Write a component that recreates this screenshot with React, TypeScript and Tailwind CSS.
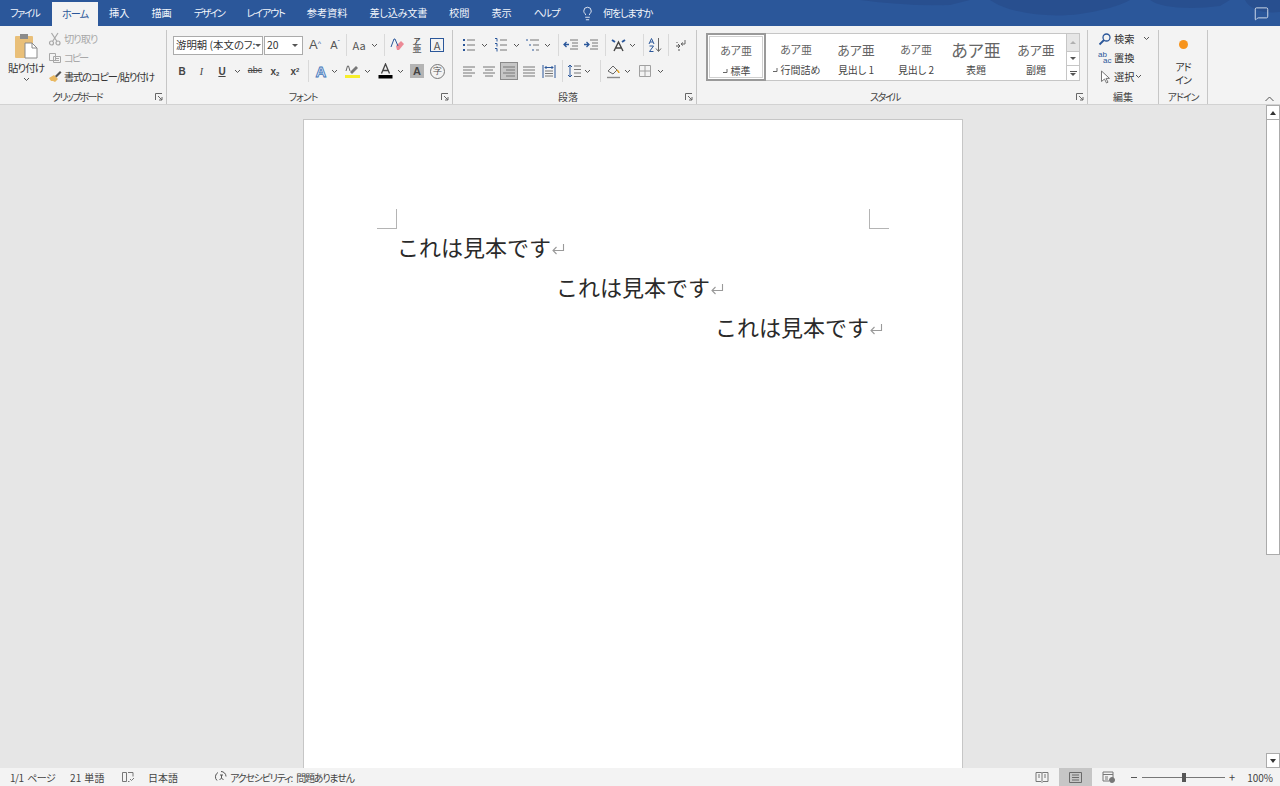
import type { ReactNode } from "react";
import { Lightbulb, MessageSquare } from "lucide-react";

const tabs = [
  { name: "挿入", tight: "" },
  { name: "描画", tight: "" },
  { name: "デザイン", tight: "tracking-[-1.7px]" },
  { name: "レイアウト", tight: "tracking-[-1.2px]" },
  { name: "参考資料", tight: "" },
  { name: "差し込み文書", tight: "tracking-[-0.3px]" },
  { name: "校閲", tight: "" },
  { name: "表示", tight: "" },
  { name: "ヘルプ", tight: "tracking-[-1.3px]" },
];

const styleItems = [
  { sample: "text-[11px]", label: "標準", mark: true, selected: true },
  { sample: "text-[11px]", label: "行間詰め", mark: true },
  { sample: "text-[13px]", label: "見出し 1" },
  { sample: "text-[11px]", label: "見出し 2" },
  { sample: "text-[17px]", label: "表題" },
  { sample: "text-[13px]", label: "副題" },
];

function Chevron({ className = "w-[10px]" }: { className?: string }) {
  return (
    <span className={`flex h-4 shrink-0 items-center justify-center ${className}`}>
      <svg width="7" height="5" viewBox="0 0 7 5" fill="none" stroke="#555" strokeWidth="1">
        <path d="M1 1l2.5 2.5L6 1" />
      </svg>
    </span>
  );
}

function Sep({ className = "" }: { className?: string }) {
  return <span className={`h-[22px] w-px shrink-0 bg-[#d9d9d9] ${className}`} />;
}

function Tool({ children, className = "w-5" }: { children: ReactNode; className?: string }) {
  return <span className={`flex h-5 shrink-0 items-center justify-center ${className}`}>{children}</span>;
}

function Icon({ children }: { children: ReactNode }) {
  return (
    <svg width="16" height="16" viewBox="0 0 16 16" fill="none" stroke="#666" strokeWidth="1">
      {children}
    </svg>
  );
}

function Launcher() {
  return (
    <svg className="absolute right-[3px] top-[3px]" width="8" height="8" viewBox="0 0 8 8" fill="none" stroke="#666" strokeWidth="1">
      <path d="M.5 7V.5H7M3 3l4 4M7 4v3H4" />
    </svg>
  );
}

function Group({ label, className, pad = "pr-[13px]", tight = "", launcher = true, children }: { label: string; className: string; pad?: string; tight?: string; launcher?: boolean; children: ReactNode }) {
  return (
    <div className={`flex h-[74px] shrink-0 flex-col border-r border-[#c6c6c6] ${className}`}>
      <div className="h-[60px]">{children}</div>
      <div className={`relative flex h-[14px] items-center justify-center text-[10px] leading-none text-[#444] ${launcher ? pad : ""}`}>
        <span className={tight}>{label}</span>
        {launcher && <Launcher />}
      </div>
    </div>
  );
}

function Lines({ align = "left", blue = false }: { align?: "left" | "center" | "right" | "justify"; blue?: boolean }) {
  const rows = {
    left: "M2 4h12M2 7h9M2 10h12M2 13h9",
    center: "M2 4h12M4 7h8M2 10h12M4 13h8",
    right: "M2 4h12M5 7h9M2 10h12M5 13h9",
    justify: "M2 4h12M2 7h12M2 10h12M2 13h12",
  }[align];
  return (
    <Icon>
      <path d={rows} stroke={blue ? "#2b579a" : "#777"} />
    </Icon>
  );
}

function ReturnMark() {
  return (
    <svg className="-mr-[15px] inline-block align-[0px]" width="15" height="15" viewBox="0 0 15 15" fill="none" stroke="#9a9a9a" strokeWidth="1.1">
      <path d="M12.5 3v6.5H2M5.5 6L2 9.5 5.5 13" />
    </svg>
  );
}

function ClipboardGroup() {
  return (
    <Group label="クリップボード" className="w-[167px]" pad="pr-[12px]" tight="tracking-[-1.7px]">
      <div className="flex h-[60px]">
        <div className="flex w-[48px] shrink-0 flex-col items-center pl-[4px]">
          <svg className="mt-[3px]" width="26" height="26" viewBox="0 0 26 26">
            <rect x="2" y="3" width="18" height="22" rx="1" fill="#e9bf78" />
            <rect x="7" y="1" width="8" height="5" fill="#8b8b8b" />
            <path d="M12 10h7l5 5v10H12z" fill="#fff" stroke="#8a8a8a" />
            <path d="M19 10v5h5" fill="none" stroke="#8a8a8a" />
          </svg>
          <span className="mt-[3px] whitespace-nowrap text-[10.5px] leading-[12px] tracking-[-1px] text-[#333]">貼り付け</span>
          <Chevron className="h-[10px] w-[10px]" />
        </div>
        <div className="-mt-px flex flex-col text-[10.2px] leading-[19px]">
          <div className="flex h-[19px] items-center text-[#a8a8a8]">
            <svg className="mr-[2px]" width="14" height="14" viewBox="0 0 14 14" fill="none" stroke="#a8a8a8" strokeWidth="1.2">
              <circle cx="3.5" cy="11" r="2" />
              <circle cx="10" cy="11" r="2" />
              <path d="M4.5 9.5L10 1M9 9.5L3.5 1" />
            </svg>
            <span className="tracking-[-1px]">切り取り</span>
          </div>
          <div className="flex h-[19px] items-center text-[#a8a8a8]">
            <svg className="mr-[2px]" width="14" height="14" viewBox="0 0 14 14" fill="none" stroke="#a8a8a8">
              <path d="M1.5 2.5h6v7h-6zM5.5 5.5h7v6h-7zM7 7.5h4M7 9.5h4" />
            </svg>
            <span className="tracking-[-2px]">コピー</span>
          </div>
          <div className="flex h-[19px] items-center whitespace-nowrap text-[#333]">
            <svg className="mr-[2px]" width="14" height="14" viewBox="0 0 14 14">
              <path d="M1 8l5-3 4 4-3 3-2-1-2 0z" fill="#e9b860" />
              <path d="M7 6l5-5 1.5 1.5-5 5z" fill="#555" />
            </svg>
            <span className="tracking-[-1.1px]">書式のコピー/貼り付け</span>
          </div>
        </div>
      </div>
    </Group>
  );
}

function FontGroup() {
  return (
    <Group label="フォント" className="w-[286px]" tight="tracking-[-1px]">
      <div className="flex h-[28px] items-center pl-[6px] pt-[2px]">
        <div className="flex h-[19px] w-[90px] items-center justify-between border border-[#ababab] bg-white pl-[2px] pr-[3px] text-[10.4px] text-[#333]">
          <span className="whitespace-nowrap">游明朝 (本文のフ:</span>
          <span className="h-0 w-0 border-x-[3px] border-t-[3px] border-x-transparent border-t-[#555]" />
        </div>
        <div className="ml-px flex h-[19px] w-[39px] items-center justify-between border border-[#ababab] bg-white pl-[2px] pr-[4px] text-[10.4px] text-[#333]">
          20
          <span className="h-0 w-0 border-x-[3px] border-t-[3px] border-x-transparent border-t-[#555]" />
        </div>
        <Tool className="ml-[2px] w-5">
          <span className="text-[13px] text-[#555]" style={{ fontFamily: "'Liberation Sans', sans-serif" }}>A<sup className="text-[7px] text-[#2b579a]">^</sup></span>
        </Tool>
        <Tool>
          <span className="text-[11px] text-[#555]" style={{ fontFamily: "'Liberation Sans', sans-serif" }}>A<sup className="text-[7px] text-[#2b579a]">ˇ</sup></span>
        </Tool>
        <Sep className="ml-px" />
        <Tool className="ml-[2px] w-5">
          <span className="text-[11px] text-[#555]">Aa</span>
        </Tool>
        <Chevron />
        <Sep className="ml-[5px]" />
        <Tool className="ml-[2px] w-5">
          <svg width="16" height="16" viewBox="0 0 16 16">
            <path d="M7 9l5-5 3 3-5 6H8z" fill="#ec8a96" />
            <path d="M2 10L5 2h1l3 7" fill="none" stroke="#2b579a" />
          </svg>
        </Tool>
        <Tool>
          <span className="flex flex-col items-center text-[7px] font-bold leading-[7px] text-[#444]">
            <span>ア</span>
            <span className="text-[9px] leading-[9px] text-[#777]">亜</span>
          </span>
        </Tool>
        <Tool>
          <span className="flex h-[14px] w-[14px] items-center justify-center border border-[#2b579a] text-[11px] leading-none text-[#555]">A</span>
        </Tool>
      </div>
      <div className="flex h-[26px] items-center pl-[5px] text-[#444]" style={{ fontFamily: "'Liberation Sans', sans-serif" }}>
        <Tool><span className="text-[10px] font-bold">B</span></Tool>
        <Tool className="w-[19px]"><span className="text-[10px] italic" style={{ fontFamily: "'Liberation Serif', serif" }}>I</span></Tool>
        <Tool className="ml-px w-5"><span className="text-[10px] font-bold underline">U</span></Tool>
        <Chevron />
        <Tool className="ml-[3px] w-5"><span className="text-[9px] line-through">abc</span></Tool>
        <Tool><span className="text-[10px] font-bold">x<sub className="text-[6px]">2</sub></span></Tool>
        <Tool><span className="text-[10px] font-bold">x<sup className="text-[6px]">2</sup></span></Tool>
        <Sep className="ml-[3px]" />
        <Tool className="ml-[4px] w-4"><span className="text-[15px] font-bold leading-none text-[#d6e4f5] [-webkit-text-stroke:0.8px_#3f74b8]">A</span></Tool>
        <Chevron />
        <Tool className="ml-[3px] w-5">
          <svg width="17" height="16" viewBox="0 0 17 16">
            <path d="M6 9l6-6 2 2-6 6z" fill="#777" />
            <path d="M2 8l1.5-5h1L6 8" fill="none" stroke="#666" />
            <rect x="1" y="12" width="15" height="3" fill="#f6ee2b" />
          </svg>
        </Tool>
        <Chevron />
        <Tool className="ml-[3px] w-5">
          <svg width="17" height="16" viewBox="0 0 17 16">
            <path d="M4.5 10.5L8.5 1l4 9.5M6 7.5h5" fill="none" stroke="#444" strokeWidth="1.3" />
            <rect x="1.5" y="12" width="14" height="3.5" fill="#000" />
          </svg>
        </Tool>
        <Chevron />
        <Tool className="ml-[2px] w-5">
          <span className="flex h-[14px] w-[14px] items-center justify-center bg-[#b4b4b4] text-[11px] font-bold leading-none text-[#444]">A</span>
        </Tool>
        <Tool>
          <span className="flex h-[15px] w-[15px] items-center justify-center rounded-full border border-[#777] text-[9px] leading-none text-[#555]">字</span>
        </Tool>
      </div>
    </Group>
  );
}

function ParagraphGroup() {
  return (
    <Group label="段落" className="w-[244px]">
      <div className="flex h-[28px] items-center pl-[6px] pt-[2px]">
        <Tool>
          <Icon>
            <path d="M6 3h8M6 8h8M6 13h8" stroke="#777" />
            <path d="M2 3h2M2 8h2M2 13h2" stroke="#2b579a" strokeWidth="2" />
          </Icon>
        </Tool>
        <Chevron />
        <Tool className="ml-[2px] w-5">
          <Icon>
            <path d="M7 3h7M7 8h7M7 13h7" stroke="#777" />
            <path d="M2 1.5h2v3M2 6.5h2v3M2 11.5h2v3" stroke="#2b579a" />
          </Icon>
        </Tool>
        <Chevron />
        <Tool className="ml-[3px] w-[18px]">
          <Icon>
            <path d="M5 3h9M8 8h6M11 13h3" stroke="#777" />
            <path d="M2 2v2M5 7v2M8 12v2" stroke="#2b579a" />
          </Icon>
        </Tool>
        <Chevron />
        <Sep className="ml-[6px]" />
        <Tool className="ml-[2px] w-5">
          <Icon>
            <path d="M7 3h8M9 6h6M9 9h6M7 12h8" stroke="#777" />
            <path d="M6 7.5H1M3.5 5L1 7.5 3.5 10" stroke="#2b579a" strokeWidth="1.3" />
          </Icon>
        </Tool>
        <Tool>
          <Icon>
            <path d="M7 3h8M9 6h6M9 9h6M7 12h8" stroke="#777" />
            <path d="M1 7.5h5M3.5 5L6 7.5 3.5 10" stroke="#2b579a" strokeWidth="1.3" />
          </Icon>
        </Tool>
        <Sep className="ml-[4px]" />
        <Tool className="ml-[2px] w-5">
          <svg width="17" height="16" viewBox="0 0 17 16" fill="none">
            <path d="M4 14L8.5 5 13 14M6 11h5" stroke="#444" strokeWidth="1.4" />
            <path d="M2 3l3 2M15 3l-3 2" stroke="#2b579a" strokeWidth="2" />
          </svg>
        </Tool>
        <Chevron className="w-2" />
        <Sep className="ml-[7px]" />
        <Tool className="ml-px w-5">
          <svg width="16" height="16" viewBox="0 0 16 16" fill="none">
            <path d="M2 7l2.5-5.5L7 7M3 5h3M2.5 9h4L2.5 14.5h4" stroke="#2b579a" />
            <path d="M11.5 1v13M9 11.5l2.5 3 2.5-3" stroke="#666" />
          </svg>
        </Tool>
        <Sep className="ml-[3px]" />
        <Tool className="ml-[2px] w-5">
          <svg width="14" height="14" viewBox="0 0 14 14" fill="none">
            <path d="M11 2v4H7.5M9 4.5L7 6l2 1.5" stroke="#666" />
            <path d="M2 8h4M4 6l2 2-2 2M5 11v2M3 4v1" stroke="#555" />
          </svg>
        </Tool>
      </div>
      <div className="flex h-[26px] items-center pl-[6px]">
        <Tool><Lines align="left" /></Tool>
        <Tool><Lines align="center" /></Tool>
        <span className="ml-px flex h-[18px] w-[18px] shrink-0 items-center justify-center border border-[#8a8a8a] bg-[#c6c6c6]">
          <Lines align="right" />
        </span>
        <Tool className="ml-px w-5"><Lines align="justify" /></Tool>
        <Tool>
          <Icon>
            <path d="M2 2v13M14 2v13" stroke="#2b579a" />
            <path d="M4 4.5h8M5.5 3L4 4.5 5.5 6M10.5 3L12 4.5 10.5 6" stroke="#2b579a" />
            <path d="M4 8h8M4 10.5h8M4 13h8" stroke="#777" />
          </Icon>
        </Tool>
        <Sep className="ml-[3px]" />
        <Tool className="ml-[2px] w-[18px]">
          <Icon>
            <path d="M8 3h7M8 6.5h7M8 10h7M8 13.5h7" stroke="#777" />
            <path d="M4 2v12M2 4l2-2 2 2M2 12l2 2 2-2" stroke="#2b579a" />
          </Icon>
        </Tool>
        <Chevron className="w-2" />
        <Sep className="ml-[9px]" />
        <Tool className="ml-[2px] w-5">
          <svg width="17" height="16" viewBox="0 0 17 16" fill="none">
            <path d="M3 8l5-5 4 4-4 4z" stroke="#666" />
            <path d="M12 7c1 1 2 2 2 3" stroke="#e3a11f" strokeWidth="1.5" />
            <path d="M2 14.5h13" stroke="#8a8a8a" strokeWidth="1.4" />
          </svg>
        </Tool>
        <Chevron className="w-2" />
        <Tool className="ml-[4px] w-5">
          <Icon>
            <path d="M2.5 2.5h11v11h-11zM8 2.5v11M2.5 8h11" stroke="#a0a0a0" />
          </Icon>
        </Tool>
        <Chevron />
      </div>
    </Group>
  );
}

function StylesGroup() {
  return (
    <Group label="スタイル" className="w-[391px]" pad="pr-[14px]" tight="tracking-[-1.5px]">
      <div className="ml-[9px] mt-[3px] flex h-[48px] w-[374px] border border-[#c6c6c6] bg-white">
        {styleItems.map((item) => (
          <div
            key={item.label}
            className={`flex w-[60px] shrink-0 flex-col items-center ${item.selected ? "-my-px -ml-px h-[48px] border-2 border-[#9a9a9a] outline outline-1 -outline-offset-[4px] outline-[#d0d0d0]" : ""}`}
          >
            <div className={`flex h-[30px] items-center whitespace-nowrap leading-none text-[#666] ${item.sample}`}>
              あア亜
            </div>
            <div className="flex items-center whitespace-nowrap text-[10px] leading-[12px] text-[#444]">
              {item.mark && (
                <svg className="mr-[3px]" width="6" height="6" viewBox="0 0 6 6" fill="none" stroke="#666">
                  <path d="M5 1v3.5H1" />
                </svg>
              )}
              {item.label}
            </div>
          </div>
        ))}
        <div className="ml-auto flex w-[13px] flex-col border-l border-[#c6c6c6] text-[#666]">
          <span className="flex h-[17px] items-center justify-center bg-[#e6e6e6]">
            <span className="h-0 w-0 border-x-[3px] border-b-[3px] border-x-transparent border-b-[#b0b0b0]" />
          </span>
          <span className="flex h-[15px] items-center justify-center border-y border-[#c6c6c6]">
            <span className="h-0 w-0 border-x-[3px] border-t-[3px] border-x-transparent border-t-[#555]" />
          </span>
          <span className="flex flex-1 flex-col items-center justify-center gap-px">
            <span className="h-px w-[7px] bg-[#555]" />
            <span className="h-0 w-0 border-x-[3px] border-t-[3px] border-x-transparent border-t-[#555]" />
          </span>
        </div>
      </div>
    </Group>
  );
}

function EditGroup() {
  return (
    <Group label="編集" className="w-[71px]" launcher={false}>
      <div className="-mt-px flex flex-col pl-[10px] text-[10.2px] leading-[19px] text-[#333]">
        <div className="flex h-[19px] items-center">
          <svg width="14" height="14" viewBox="0 0 14 14" fill="none" stroke="#2b579a" strokeWidth="1.3">
            <circle cx="8.5" cy="5.5" r="3.5" />
            <path d="M6 8l-4.5 4.5" strokeWidth="1.8" />
          </svg>
          <span className="ml-[2px]">検索</span>
          <Chevron className="ml-[7px] w-[10px]" />
        </div>
        <div className="flex h-[19px] items-center">
          <span className="flex h-[14px] w-[14px] items-center text-[8px] leading-none text-[#2b579a]" style={{ fontFamily: "'Liberation Sans', sans-serif" }}>
            <span className="-mt-[6px]">ab</span>
          </span>
          <span className="-ml-[9px] mt-[6px] w-[9px] text-[8px] leading-none text-[#2b579a]" style={{ fontFamily: "'Liberation Sans', sans-serif" }}>ac</span>
          <span className="ml-[2px]">置換</span>
        </div>
        <div className="flex h-[19px] items-center">
          <svg width="14" height="14" viewBox="0 0 14 14" fill="#fff" stroke="#777">
            <path d="M3.5 1v10.5l3-2.5 2 4 1.5-.8-2-3.8h3.5z" />
          </svg>
          <span className="ml-[2px]">選択</span>
          <Chevron className="w-[8px]" />
        </div>
      </div>
    </Group>
  );
}

function AddinGroup() {
  return (
    <Group label="アドイン" className="w-[49px]" launcher={false} tight="tracking-[-1px]">
      <div className="flex flex-col items-center text-[10px] leading-[13px] tracking-[-1px] text-[#333]">
        <span className="mt-[10px] h-[9px] w-[9px] rounded-full bg-[#f7941d]" />
        <span className="mt-[11px]">アド</span>
        <span>イン</span>
      </div>
    </Group>
  );
}

export default function App() {
  return (
    <div className="flex h-[786px] w-[1280px] flex-col overflow-hidden bg-[#e6e6e6] font-['Noto_Sans_CJK_JP',sans-serif] [font-feature-settings:'palt']">
      {/* tab strip */}
      <div className="relative flex h-[26px] shrink-0 bg-[#2b579a] text-[10.2px] text-[#f2f5fa]">
        <svg className="absolute right-0 top-0" width="420" height="16" viewBox="0 0 420 16" fill="#284f8f">
          <path d="M0 0c30 4 60 6 90 5l20-5zM130 0c20 14 60 18 90 14 20-3 40-8 50-14zM290 0c10 8 40 10 70 6l10-6zM385 0c5 10 20 14 35 12V0z" />
        </svg>
        <span className="relative flex w-[52px] items-center pl-[10px] tracking-[-1.5px]">ファイル</span>
        <span className="relative mt-[2px] flex w-[46px] items-center justify-center bg-[#f3f3f3] tracking-[-1px] text-[#2b579a]">ホーム</span>
        {tabs.map((tab) => (
          <span key={tab.name} className={`relative flex items-center whitespace-nowrap px-[11px] ${tab.tight}`}>
            {tab.name}
          </span>
        ))}
        <span className="relative ml-[10px] flex items-center">
          <Lightbulb className="size-[15px]" strokeWidth={1.4} />
          <span className="ml-[8px] tracking-[-1.3px]">何をしますか</span>
        </span>
        <MessageSquare className="absolute right-[11px] top-[6px] size-[15px]" strokeWidth={1.3} />
      </div>

      {/* ribbon */}
      <div className="relative flex h-[79px] shrink-0 border-b border-[#d2d2d2] bg-[#f3f3f3] pt-[4px]">
        <ClipboardGroup />
        <FontGroup />
        <ParagraphGroup />
        <StylesGroup />
        <EditGroup />
        <AddinGroup />
        <svg className="absolute bottom-[2px] right-[6px]" width="9" height="6" viewBox="0 0 9 6" fill="none" stroke="#555">
          <path d="M.5 5l4-4 4 4" />
        </svg>
      </div>

      {/* document */}
      <div className="flex min-h-0 flex-1">
        <div className="flex min-w-0 flex-1 justify-center overflow-hidden pt-[14px]">
          <div className="h-[700px] w-[660px] shrink-0 border border-[#c6c6c6] bg-white px-[73px] pt-[89px]">
            <div className="flex justify-between">
              <span className="h-[20px] w-[20px] border-b border-r border-[#b4b4b4]" />
              <span className="h-[20px] w-[20px] border-b border-l border-[#b4b4b4]" />
            </div>
            <div className="-mt-[3px] px-[20px] text-[22px] leading-[40px] text-[#2a2a2a] [font-feature-settings:normal]">
              <p>これは見本です<ReturnMark /></p>
              <p className="text-center">これは見本です<ReturnMark /></p>
              <p className="text-right">これは見本です<ReturnMark /></p>
            </div>
          </div>
        </div>
        <div className="flex w-[14px] shrink-0 flex-col bg-[#e6e6e6]">
          <span className="flex h-[15px] items-center justify-center border border-[#ababab] bg-white">
            <span className="h-0 w-0 border-x-[3.5px] border-b-[4px] border-x-transparent border-b-[#333]" />
          </span>
          <span className="-mt-px h-[436px] border border-[#ababab] bg-white" />
          <span className="mt-auto flex h-[15px] items-center justify-center border border-[#ababab] bg-white">
            <span className="h-0 w-0 border-x-[3.5px] border-t-[4px] border-x-transparent border-t-[#333]" />
          </span>
        </div>
      </div>

      {/* status bar */}
      <div className="flex h-[18px] shrink-0 items-center bg-[#f3f3f3] text-[10px] text-[#444]">
        <span className="ml-[10px] w-[60px] tracking-[-0.5px] [word-spacing:2px]">1/1 ページ</span>
        <span className="w-[51px] tracking-[0.3px]">21 単語</span>
        <svg width="14" height="12" viewBox="0 0 14 12" fill="none" stroke="#777">
          <path d="M1.5 1.5h4v9h-4zM7 10.5h1.5M7 1.5h5v4M9 8l1.5 1.5L13 7" />
        </svg>
        <span className="ml-[13px] w-[66px]">日本語</span>
        <svg width="14" height="14" viewBox="0 0 14 14" fill="none" stroke="#555">
          <path d="M3 10.5A5 5 0 0 1 4 2.5M7 1.5a5 5 0 0 1 5 5M6 5h3M7.5 5v3l2 2M7.5 8l-2 2" />
        </svg>
        <span className="ml-[2px] tracking-[-1.2px] [word-spacing:3px]">アクセシビリティ: 問題ありません</span>
        <div className="ml-auto flex h-full items-center">
          <svg width="14" height="12" viewBox="0 0 14 12" fill="none" stroke="#777">
            <path d="M1 1.5h5.5l.5 1 .5-1H13v9H8l-1 1-1-1H1zM7 2.5v8M3 4h2M3 6h2M9 4h2M9 6h2" />
          </svg>
          <span className="ml-[10px] flex h-full w-[33px] items-center justify-center bg-[#c6c6c6]">
            <svg width="13" height="11" viewBox="0 0 13 11" fill="none" stroke="#6a6a6a">
              <path d="M.5.5h12v10H.5zM3 3h7M3 5.5h7M3 8h7" />
            </svg>
          </span>
          <svg className="ml-[10px]" width="14" height="12" viewBox="0 0 14 12" fill="none" stroke="#777">
            <path d="M1 1h10v6M1 1v9h6M1 3.5h10M3 6h3M3 8h3" />
            <circle cx="10" cy="9" r="2.5" fill="#777" />
          </svg>
          <span className="ml-[15px] h-px w-[6px] bg-[#555]" />
          <span className="relative ml-[5px] flex h-[10px] w-[83px] items-center justify-center">
            <span className="absolute inset-x-0 top-[5px] h-px bg-[#777]" />
            <span className="relative h-[9px] w-[4px] bg-[#555]" />
          </span>
          <span className="ml-[4px] text-[11px] leading-none">+</span>
          <span className="ml-[12px] mr-[7px]">100%</span>
        </div>
      </div>
    </div>
  );
}
